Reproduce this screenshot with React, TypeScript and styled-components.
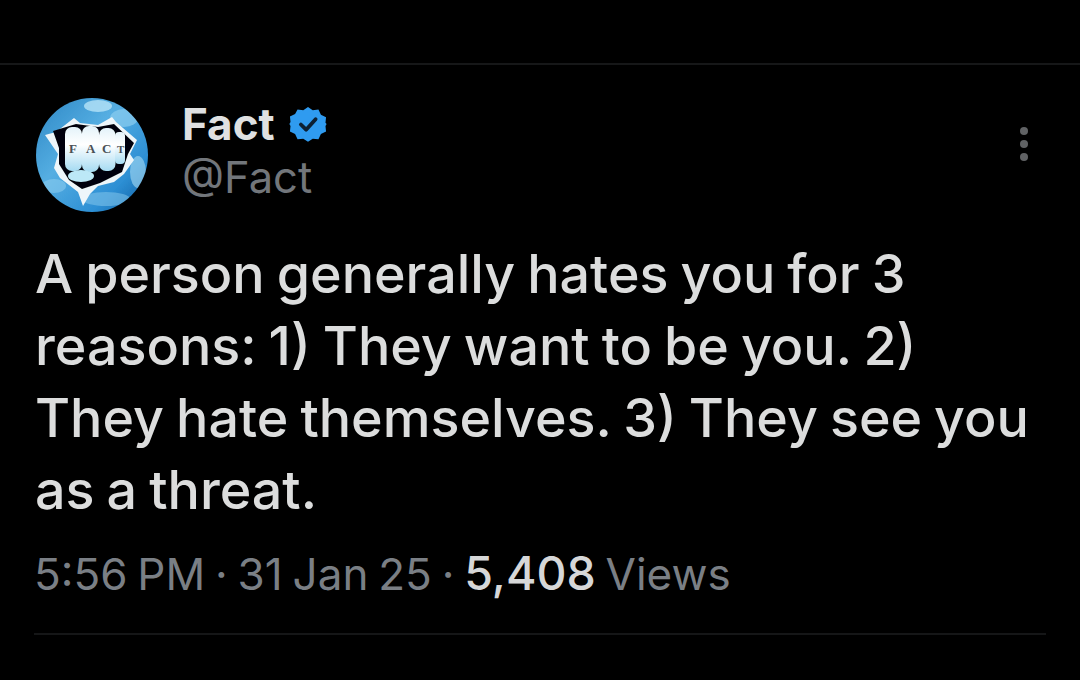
import React from "react";
import styled, { createGlobalStyle } from "styled-components";

const Global = createGlobalStyle`
  html, body { margin: 0; padding: 0; background: #000; }
  body { font-family: Inter, "Liberation Sans", sans-serif; }
`;

const Page = styled.main`
  width: 1080px;
  height: 680px;
  background: #000;
  overflow: hidden;
  display: flex;
  flex-direction: column;
  padding-top: 63px;
  box-sizing: border-box;
`;

const TopRule = styled.div`
  height: 2px;
  background: #161718;
`;

const Tweet = styled.article`
  padding: 33px 34px 0 36px;
  display: flex;
  flex-direction: column;
`;

const Header = styled.header`
  display: flex;
  align-items: flex-start;
`;

const Avatar = styled.svg`
  width: 112px;
  height: 114px;
  flex: none;
`;

const Identity = styled.div`
  margin-left: 34px;
  display: flex;
  flex-direction: column;
  flex: 1;
`;

const NameRow = styled.div`
  display: flex;
  align-items: center;
  gap: 14px;
  height: 52px;
`;

const Name = styled.span`
  font-size: 44px;
  font-weight: 700;
  color: #dfe0e1;
  line-height: 52px;
`;

const Handle = styled.span`
  font-size: 43.500px;
  color: #72767b;
  line-height: 52px;
  margin-top: 1px;
`;

const More = styled.div`
  display: flex;
  flex-direction: column;
  gap: 5px;
  margin: 29px 18px 0 0;
`;

const Dot = styled.span`
  width: 8px;
  height: 8px;
  border-radius: 50%;
  background: #606264;
`;

const Body = styled.p`
  margin: 26px 0 0 -1px;
  font-size: 53.800px;
  font-weight: 500;
  line-height: 72px;
  word-spacing: -2.300px;
  color: #dcdddd;
  width: 1010px;
  white-space: nowrap;
`;

const Meta = styled.div`
  margin: 19px 0 0 -2px;
  font-size: 44px;
  line-height: 56px;
  word-spacing: -2.500px;
  color: #7a7f85;
  white-space: nowrap;
`;

const Strong = styled.span`
  color: #d6d7d8;
  font-size: 46.500px;
  font-weight: 450;
`;

const BottomRule = styled.div`
  margin: 31px 0 0 -2px;
  height: 2px;
  width: 1012px;
  background: #151617;
`;

const Badge = () => (
  <svg width="38" height="38" viewBox="0 0 40 40" aria-hidden="true">
    <path
      fill="#2f9bf0"
      d="M20 2l5 3.400 6-.6 2.600 5.400 5.400 2.600-.6 6L39.600 20l-1.200 2 .6 6-5.400 2.600-2.600 5.400-6-.6L20 38.800l-5-3.400-6 .6-2.600-5.400L1 28l.6-6L.4 20l1.200-2-.6-6 5.400-2.600L9 4.800l6 .6z"
    />
    <path fill="none" stroke="#0c2033" strokeWidth="4" strokeLinecap="round" strokeLinejoin="round" d="M12.500 20.500l5.500 5.500 10-11" />
  </svg>
);

const LogoAvatar = () => (
  <Avatar viewBox="0 0 112 114" aria-label="Fact">
    <defs>
      <linearGradient id="sky" x1="0" y1="0" x2="1" y2="1">
        <stop offset="0" stopColor="#2c86c4" />
        <stop offset="0.4" stopColor="#55aee2" />
        <stop offset="0.75" stopColor="#2d8fd4" />
        <stop offset="1" stopColor="#0e5a9c" />
      </linearGradient>
      <linearGradient id="knuckle" x1="0" y1="0" x2="0" y2="1">
        <stop offset="0" stopColor="#e4f3fa" />
        <stop offset="0.4" stopColor="#ffffff" />
        <stop offset="1" stopColor="#a6dbf2" />
      </linearGradient>
      <clipPath id="disc"><ellipse cx="56" cy="57" rx="56" ry="57" /></clipPath>
      <filter id="soft"><feGaussianBlur stdDeviation="0.7" /></filter>
    </defs>
    <g clipPath="url(#disc)">
      <g filter="url(#soft)">
        <rect width="112" height="114" fill="url(#sky)" />
        <ellipse cx="62" cy="8" rx="14" ry="6" fill="#b7e3f8" opacity="0.8" />
        <ellipse cx="88" cy="20" rx="14" ry="9" fill="#8ccdf0" opacity="0.7" />
        <ellipse cx="102" cy="74" rx="8" ry="16" fill="#a9dcf4" opacity="0.6" />
        <ellipse cx="70" cy="101" rx="24" ry="7" fill="#7cc2ea" opacity="0.6" />
        <ellipse cx="18" cy="88" rx="12" ry="7" fill="#8fcff0" opacity="0.55" />
        <path d="M9 37 L20 34 L38 20 L44 25 L62 27 L76 19 L80 24 L101 42 L94 56 L98 62 L88 76 L78 84 L62 88 L54 96 L47 108 L42 94 L24 80 L18 70 L22 56 Z" fill="#eef6fa" />
        <path d="M17 33 L40 26 L62 29 L78 26 L98 45 L92 56 L86 74 L64 85 L46 91 L33 82 L23 66 L23 50 Z" fill="#03050a" />
        <rect x="29" y="29" width="17" height="44" rx="7" fill="url(#knuckle)" />
        <rect x="46" y="28" width="17" height="46" rx="7" fill="url(#knuckle)" />
        <rect x="63" y="30" width="16.500" height="43" rx="7" fill="url(#knuckle)" />
        <rect x="79" y="34" width="10" height="32" rx="4" fill="url(#knuckle)" />
        <ellipse cx="45" cy="78" rx="13" ry="6" fill="#bce8f7" />
      </g>
      <text x="33" y="55" fontSize="13" fontFamily="Liberation Serif, serif" fontWeight="700" fill="#4a5056">F</text>
      <text x="50" y="55" fontSize="13" fontFamily="Liberation Serif, serif" fontWeight="700" fill="#4a5056">A</text>
      <text x="66" y="55" fontSize="13" fontFamily="Liberation Serif, serif" fontWeight="700" fill="#4a5056">C</text>
      <text x="81" y="55" fontSize="11" fontFamily="Liberation Serif, serif" fontWeight="700" fill="#4a5056">T</text>
    </g>
  </Avatar>
);

export default function App() {
  return (
    <Page>
      <Global />
      <TopRule />
      <Tweet>
        <Header>
          <LogoAvatar />
          <Identity>
            <NameRow>
              <Name>Fact</Name>
              <Badge />
            </NameRow>
            <Handle>@Fact</Handle>
          </Identity>
          <More>
            <Dot />
            <Dot />
            <Dot />
          </More>
        </Header>
        <Body>
          A person generally hates you for 3<br />
          reasons: 1) They want to be you. 2)<br />
          They hate themselves. 3) They see you<br />
          as a threat.
        </Body>
        <Meta>
          5:56 PM · 31 Jan 25 · <Strong>5,408</Strong> Views
        </Meta>
        <BottomRule />
      </Tweet>
    </Page>
  );
}
